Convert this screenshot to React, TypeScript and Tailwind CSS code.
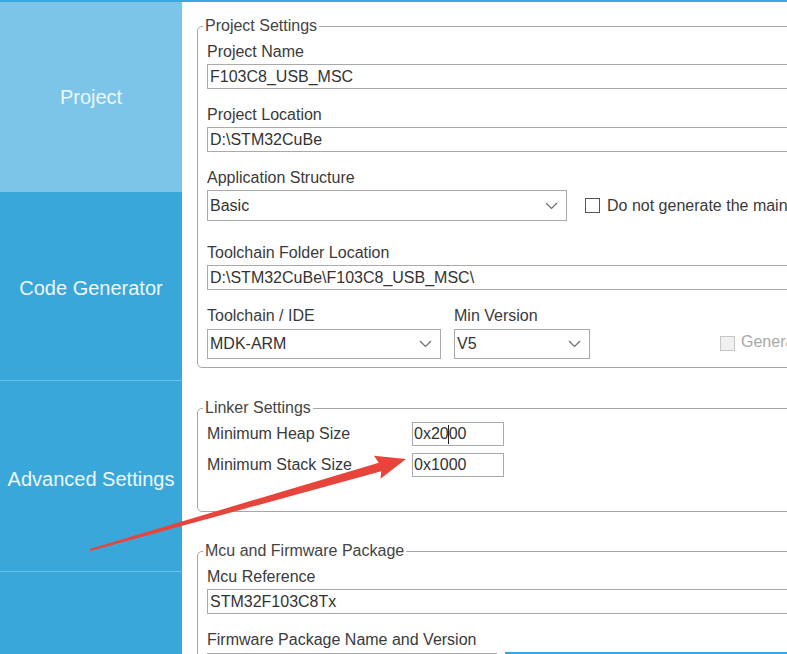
import React from 'react'

function Chevron() {
  return (
    <svg width="13" height="8" viewBox="0 0 13 8" className="shrink-0">
      <polyline points="1,1 6.5,6.5 12,1" fill="none" stroke="#6b6b6b" strokeWidth="1.2" />
    </svg>
  )
}

function Field({ value, className = '' }: { value: string; className?: string }) {
  return (
    <div className={`flex h-[25px] items-center border border-[#aaaaaa] bg-white pl-[2px] text-[#333] ${className}`}>
      {value}
    </div>
  )
}

function Select({ value, className = '' }: { value: string; className?: string }) {
  return (
    <div className={`flex items-center justify-between border border-[#aaaaaa] bg-white pl-[2px] pr-[8px] text-[#333] ${className}`}>
      <span>{value}</span>
      <Chevron />
    </div>
  )
}

function Group({ title, className = '', children }: { title: string; className?: string; children: React.ReactNode }) {
  return (
    <fieldset className={`w-[660px] rounded-[5px] border border-[#a6a6a6] px-[9px] ${className}`}>
      <legend className="-ml-[4px] px-[2px] leading-[18px] text-[#444]">{title}</legend>
      {children}
    </fieldset>
  )
}

const tabs = [
  { label: 'Project', h: 'h-[190px]', bg: 'bg-[#7cc5e8]', border: '', pad: '' },
  { label: 'Code Generator', h: 'h-[189px]', bg: '', border: 'border-b border-[#6cbce4]', pad: 'pt-[3px]' },
  { label: 'Advanced Settings', h: 'h-[191px]', bg: '', border: 'border-b border-[#6cbce4]', pad: 'pt-[5px]' },
]

export default function App() {
  return (
    <div className="relative h-[654px] w-[787px] overflow-hidden bg-white font-['Liberation_Sans',Arial,sans-serif] text-[16px] leading-[18px]">
      <div className="h-[2px] bg-[#3aa8dc]" />
      <div className="flex h-[652px]">
        {/* левая панель вкладок */}
        <aside className="flex w-[182px] shrink-0 flex-col bg-[#3aa7da]">
          {tabs.map(t => (
            <div key={t.label} className={`flex items-center justify-center text-[20px] text-[#eef7fc] ${t.h} ${t.bg} ${t.border} ${t.pad}`}>
              {t.label}
            </div>
          ))}
        </aside>

        {/* правая часть — формы */}
        <main className="min-w-0 flex-1 overflow-hidden pl-[15px] text-[#3a3a3a]">
          <Group title="Project Settings" className="mt-[15px] pb-[8px]">
            <div className="mt-[8px]">Project Name</div>
            <Field value="F103C8_USB_MSC" className="mt-[3px]" />
            <div className="mt-[17px]">Project Location</div>
            <Field value="D:\STM32CuBe" className="mt-[3px]" />
            <div className="mt-[17px]">Application Structure</div>
            <div className="mt-[3px] flex items-center">
              <Select value="Basic" className="h-[31px] w-[360px]" />
              <div className="ml-[18px] h-[15px] w-[15px] border border-[#555]" />
              <span className="ml-[7px] whitespace-nowrap">Do not generate the main()</span>
            </div>
            <div className="mt-[23px]">Toolchain Folder Location</div>
            <Field value="D:\STM32CuBe\F103C8_USB_MSC\" className="mt-[3px] h-[24px]" />
            <div className="mt-[17px] flex">
              <div className="w-[247px]">
                <div>Toolchain / IDE</div>
                <Select value="MDK-ARM" className="mt-[4px] h-[30px] w-[234px]" />
              </div>
              <div>
                <div>Min Version</div>
                <Select value="V5" className="mt-[4px] h-[30px] w-[136px]" />
              </div>
              <div className="ml-[130px] flex items-end pb-[8px]">
                <div className="h-[15px] w-[15px] border border-[#c6c6c6] bg-[#f0f0f0]" />
                <span className="ml-[6px] whitespace-nowrap text-[#a8a8a8]">Generate Under Root</span>
              </div>
            </div>
          </Group>

          <Group title="Linker Settings" className="mt-[31px] pb-[34px]">
            <div className="mt-[5px] flex items-center">
              <span className="w-[205px]">Minimum Heap Size</span>
              <div className="flex h-[24px] w-[92px] items-center border border-[#aaaaaa] pl-[1px] text-[#333]">
                0x20
                <span className="mx-[-0.5px] h-[19px] w-px bg-[#222]" />
                00
              </div>
            </div>
            <div className="mt-[7px] flex items-center">
              <span className="w-[205px]">Minimum Stack Size</span>
              <div className="flex h-[24px] w-[92px] items-center border border-[#aaaaaa] pl-[1px] text-[#333]">0x1000</div>
            </div>
          </Group>

          <Group title="Mcu and Firmware Package" className="mt-[30px] pb-[10px]">
            <div className="mt-[8px]">Mcu Reference</div>
            <Field value="STM32F103C8Tx" className="mt-[3px] h-[24px]" />
            <div className="mt-[17px] whitespace-nowrap">Firmware Package Name and Version</div>
            <div className="mt-[3px] flex items-start">
              <div className="mt-[1px] h-[30px] w-[290px] shrink-0 border border-[#aaaaaa]" />
              <div className="ml-[8px] h-[30px] flex-1 bg-[#3aa7da]" />
            </div>
          </Group>
        </main>
      </div>

      {/* красная стрелка поверх скриншота */}
      <svg className="pointer-events-none absolute inset-0" width="787" height="654" viewBox="0 0 787 654">
        <polygon
          points="89.7,549 378.8,462.7 373.9,455.7 406,459 380.5,478.7 381.2,471.3 90.3,551"
          fill="#e8443b"
        />
      </svg>
    </div>
  )
}
